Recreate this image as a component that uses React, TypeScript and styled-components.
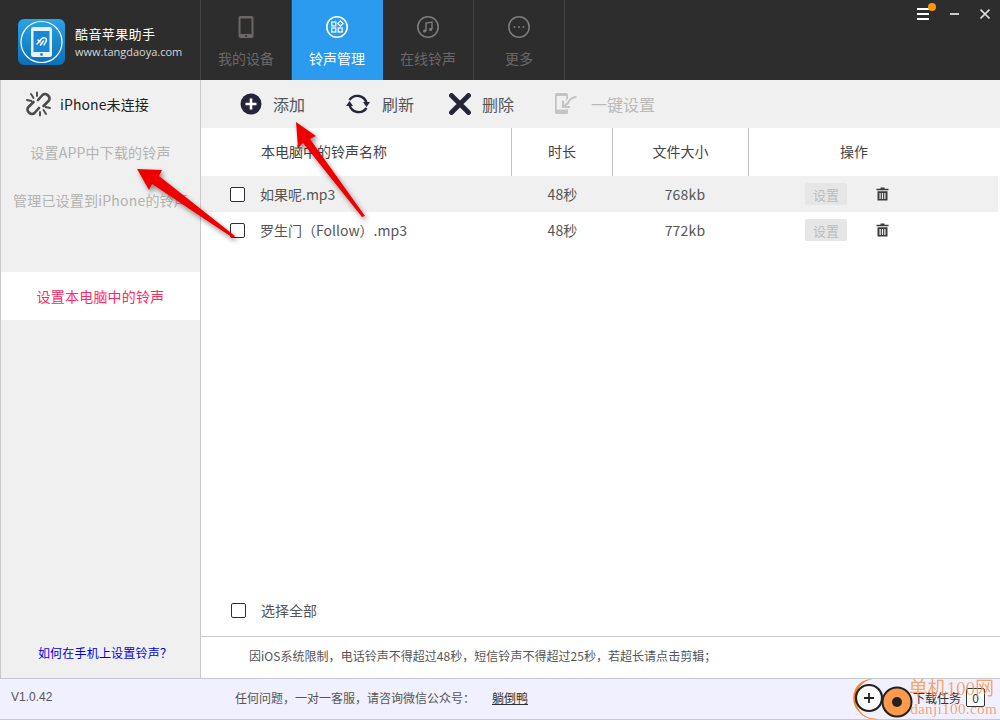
import styled, { createGlobalStyle } from "styled-components"

const CJK = `"Noto Sans CJK SC", "Liberation Sans", sans-serif`

const GlobalStyle = createGlobalStyle`
html, body {
    margin: 0;
    padding: 0;
    background: #fff;
    overflow: hidden;
}
* {
    box-sizing: border-box;
}
`

const Window = styled.div`
position: relative;
width: 1000px;
height: 720px;
display: flex;
flex-direction: column;
font-family: ${CJK};
font-size: 14px;
color: #555;
overflow: hidden;
`

const TopBar = styled.header`
height: 80px;
flex: none;
display: flex;
background: #2d2d2d;
`

const Brand = styled.div`
width: 201px;
flex: none;
display: flex;
align-items: center;
gap: 10px;
padding: 4px 0 0 18px;
border-right: 1px solid #414141;
`

const BrandText = styled.div`
display: flex;
flex-direction: column;
gap: 3px;
`

const BrandName = styled.div`
color: #fff;
font-size: 13px;
letter-spacing: 0.4px;
line-height: 16px;
`

const BrandUrl = styled.div`
color: #d8d8d8;
font-family: "Open Sans", sans-serif;
font-size: 11px;
line-height: 13px;
white-space: nowrap;
`

const Tab = styled.div<{ $active?: boolean }>`
width: 91px;
flex: none;
display: flex;
flex-direction: column;
align-items: center;
padding-top: 15px;
gap: 9px;
background: ${p => p.$active ? '#2a9bee' : 'transparent'};
color: ${p => p.$active ? '#fff' : '#6c6667'};
border-right: 1px solid ${p => p.$active ? '#2a9bee' : '#414141'};
font-size: 14px;
line-height: 20px;

svg {
    height: 24px;
    width: 24px;
}
`

const WindowControls = styled.div`
margin-left: auto;
height: 26px;
display: flex;
align-items: flex-start;
padding: 6px 10px 0 0;
gap: 20px;
`

const MenuButton = styled.div`
position: relative;
width: 12px;
height: 12px;
margin-top: 2px;
margin-right: 1px;
display: flex;
flex-direction: column;
justify-content: space-between;

    span {
    height: 2px;
    background: #fff;
    }

    i {
    position: absolute;
    top: -5px;
    left: 11px;
    width: 8px;
    height: 8px;
    border-radius: 50%;
    background: #ff9800;
    }
`

const Main = styled.div`
flex: 1;
min-height: 0;
display: flex;
`

const Sidebar = styled.aside`
width: 201px;
flex: none;
display: flex;
flex-direction: column;
background: #f0f0f0;
border-left: 1px solid #c8c8c8;
border-right: 1px solid #c8c8c8;
`

const DeviceStatus = styled.div`
height: 48px;
display: flex;
align-items: center;
gap: 8px;
padding-left: 24px;
color: #222;
font-size: 14px;
letter-spacing: 0.1px;
`

const SideItem = styled.div<{ $active?: boolean }>`
height: 48px;
display: flex;
align-items: center;
justify-content: center;
white-space: nowrap;
font-size: 14px;
letter-spacing: 0.2px;
background: ${p => p.$active ? '#fff' : 'transparent'};
color: ${p => p.$active ? '#ff2b68' : '#b2b2b2'};
`

const SideSpacer = styled.div`
height: 48px;
`

const HelpLink = styled.div`
margin-top: auto;
height: 50px;
display: flex;
align-items: center;
justify-content: center;
padding: 0 0 1px 9px;
color: #0000e6;
font-size: 12px;
letter-spacing: 0.2px;
`

const Content = styled.section`
flex: 1;
min-width: 0;
display: flex;
flex-direction: column;
`

const Toolbar = styled.div`
height: 48px;
flex: none;
display: flex;
align-items: center;
background: #f0f0f0;
padding: 0 0 0 39px;
`

const ToolButton = styled.div<{ $disabled?: boolean; $gap: number; $width: number }>`
width: ${p => p.$width}px;
flex: none;
display: flex;
align-items: center;
gap: ${p => p.$gap}px;
font-size: 16px;
color: ${p => p.$disabled ? '#b9b9b9' : '#555'};
white-space: nowrap;
`

const Grid = styled.div`
display: grid;
grid-template-columns: 311px 101px 136px 1fr;
`

const TableHead = styled(Grid)`
height: 48px;
flex: none;
`

const HeadCell = styled.div<{ $first?: boolean }>`
display: flex;
align-items: center;
justify-content: ${p => p.$first ? 'flex-start' : 'center'};
padding-left: ${p => p.$first ? '60px' : '0'};
padding-bottom: 2px;
border-right: 1px solid #c4c4c4;
font-size: 14px;
color: #444;

    &:last-child {
    border-right: 0;
    padding-right: 41px;
    }
`

const Row = styled(Grid)<{ $shaded?: boolean }>`
height: 36px;
width: 797px;
flex: none;
align-items: center;
background: ${p => p.$shaded ? '#f0f0f0' : '#fff'};
`

const NameCell = styled.div`
display: flex;
align-items: center;
gap: 15px;
padding-left: 29px;
`

const Check = styled.span`
width: 15px;
height: 15px;
flex: none;
display: block;
border: 1.5px solid #2d2d3a;
border-radius: 2px;
background: #fff;
`

const ValueCell = styled.div<{ $pad?: number }>`
text-align: center;
padding-left: ${p => p.$pad ?? 0}px;
letter-spacing: 0.2px;
`

const ActionCell = styled.div`
display: flex;
align-items: center;
padding-left: 56px;
gap: 29px;
`

const SetButton = styled.div`
width: 42px;
height: 22px;
display: flex;
align-items: center;
justify-content: center;
border-radius: 2px;
background: #e6e6e6;
color: #bcbcbc;
font-size: 13px;
`

const SelectAll = styled.div`
margin-top: auto;
height: 50px;
flex: none;
display: flex;
align-items: center;
gap: 15px;
padding: 0 0 3px 30px;
border-bottom: 1px solid #c8c8c8;
font-size: 14px;
`

const Notice = styled.div`
height: 41px;
flex: none;
display: flex;
align-items: center;
padding: 0 0 4px 48px;
font-size: 12px;
letter-spacing: 0.03px;
color: #555;
`

const Footer = styled.footer`
height: 42px;
flex: none;
display: flex;
align-items: center;
padding: 0 0 4px 11px;
background: #f0f0fe;
border-top: 1px solid #c8c8d0;
border-bottom: 1px solid #c8c8d0;
font-size: 12px;
color: #555;
`

const Version = styled.div`
width: 224px;
font-family: "Liberation Sans", sans-serif;
`

const Support = styled.div`
width: 257px;
white-space: nowrap;
`

const Wechat = styled.div`
text-decoration: underline;
color: #333;
`

const Tasks = styled.div`
margin-left: auto;
display: flex;
align-items: center;
gap: 5px;
padding-right: 15px;
color: #333;
`

const TaskCount = styled.div`
width: 19px;
height: 19px;
display: flex;
align-items: center;
justify-content: center;
border: 1px solid #333;
border-radius: 2px;
background: #fff;
`

// annotations that were painted over the screenshot
const Overlay = styled.svg`
position: absolute;
top: 0;
left: 0;
width: 1000px;
height: 720px;
pointer-events: none;
`

const Watermark = styled.div`
position: absolute;
right: 3px;
bottom: 2px;
display: flex;
flex-direction: column;
align-items: flex-end;
color: #ff8a3c;
opacity: 0.75;
font-family: "Liberation Serif", "Noto Sans CJK SC", serif;
pointer-events: none;
`

const WatermarkName = styled.div`
font-size: 19px;
line-height: 24px;
white-space: nowrap;
margin-right: 3px;
`

const WatermarkUrl = styled.div`
font-size: 15px;
line-height: 17px;
letter-spacing: 0.4px;
`

function Logo() {
    return (
        <svg width="47" height="46" viewBox="0 0 47 46">
            <defs>
                <linearGradient id="logoBg" x1="0" y1="0" x2="0" y2="1">
                    <stop offset="0" stopColor="#2aa3e8" />
                    <stop offset="1" stopColor="#0b6fb8" />
                </linearGradient>
            </defs>
            <rect width="47" height="46" rx="6" fill="url(#logoBg)" />
            <circle cx="23.5" cy="23" r="20.500" fill="none" stroke="#fff" strokeWidth="1.200" />
            <rect x="13" y="8" width="21" height="30" rx="2.500" fill="#e8f2fa" />
            <rect x="15.500" y="12" width="16" height="21" fill="#1a86d4" />
            <circle cx="23.500" cy="35.500" r="1.400" fill="#1a86d4" />
            <path d="M19 25l4.500-5c2.500-2.500 6-0.500 4.500 2.500l-2 3.500M22.500 26l3-4M20 21l2 2" fill="none" stroke="#fff" strokeWidth="1.500" strokeLinecap="round" />
        </svg>
    )
}

function PhoneIcon() {
    return (
        <svg viewBox="0 0 24 24">
            <rect x="4.500" y="1" width="15" height="22" rx="2" fill="#6c6667" />
            <rect x="6.500" y="3.500" width="11" height="15.500" fill="#2d2d2d" />
            <circle cx="12" cy="21" r="1" fill="#2d2d2d" />
        </svg>
    )
}

function AppsIcon() {
    return (
        <svg viewBox="0 0 24 24" fill="none" stroke="#fff">
            <circle cx="12" cy="12" r="10.200" strokeWidth="1.600" />
            <rect x="6.800" y="7" width="4" height="4" strokeWidth="1.200" />
            <rect x="13.500" y="6.600" width="3.800" height="3.800" strokeWidth="1.200" transform="rotate(45 15.400 8.500)" />
            <rect x="6.800" y="13" width="4" height="4" strokeWidth="1.200" />
            <rect x="13.200" y="13" width="4" height="4" strokeWidth="1.200" />
        </svg>
    )
}

function MusicIcon() {
    return (
        <svg viewBox="0 0 24 24" fill="none" stroke="#7d7d7d">
            <circle cx="12" cy="12" r="10.200" strokeWidth="1.600" />
            <path d="M10 16V8l6-1v7" strokeWidth="1.400" />
            <circle cx="8.600" cy="16" r="1.600" fill="#7d7d7d" strokeWidth="0" />
            <circle cx="14.600" cy="14.400" r="1.600" fill="#7d7d7d" strokeWidth="0" />
        </svg>
    )
}

function MoreIcon() {
    return (
        <svg viewBox="0 0 24 24" fill="none" stroke="#7d7d7d">
            <circle cx="12" cy="12" r="10.200" strokeWidth="1.600" />
            <circle cx="7.500" cy="12" r="1" fill="#7d7d7d" strokeWidth="0" />
            <circle cx="12" cy="12" r="1" fill="#7d7d7d" strokeWidth="0" />
            <circle cx="16.500" cy="12" r="1" fill="#7d7d7d" strokeWidth="0" />
        </svg>
    )
}

function MinimizeIcon() {
    return (
        <svg width="10" height="14" viewBox="0 0 10 14">
            <rect x="0" y="7" width="9" height="2" fill="#ccc" />
        </svg>
    )
}

function CloseIcon() {
    return (
        <svg width="10" height="14" viewBox="0 0 10 14">
            <path d="M0.500 3.500l9 9M9.500 3.500l-9 9" stroke="#ddd" strokeWidth="1.700" />
        </svg>
    )
}

function BrokenLinkIcon() {
    return (
        <svg width="27" height="26" viewBox="0 0 27 26" fill="none" stroke="#4a4a4a" strokeWidth="2.600" strokeLinecap="round" strokeLinejoin="round">
            <path d="M13 9l4.500-5a3.500 3.500 0 0 1 5 0l1 1a3.500 3.500 0 0 1 0 5l-5 5" />
            <path d="M14 17l-4.500 5a3.500 3.500 0 0 1-5 0l-1-1a3.500 3.500 0 0 1 0-5l5-5" />
            <path d="M2 9l4.500 1M6 3l2.500 4M12 1.500v3.500M25 17l-4.500-1M21 23l-2.500-4M15 24.500V21" strokeWidth="1.900" />
        </svg>
    )
}

function AddIcon() {
    return (
        <svg width="22" height="22" viewBox="0 0 22 22">
            <circle cx="11" cy="11" r="10.500" fill="#25253a" />
            <path d="M11 5.500v11M5.500 11h11" stroke="#fff" strokeWidth="2.600" />
        </svg>
    )
}

function RefreshIcon() {
    return (
        <svg width="24" height="24" viewBox="0 0 24 24" fill="none">
            <path d="M3.500 8a9.500 9.500 0 0 1 17 3" stroke="#25253a" strokeWidth="2.400" />
            <path d="M20.500 16a9.500 9.500 0 0 1-17-3" stroke="#25253a" strokeWidth="2.400" />
            <path d="M17 10h7l-3.500 5zM0 14h7l-3.500-5z" fill="#25253a" />
        </svg>
    )
}

function DeleteIcon() {
    return (
        <svg width="22" height="22" viewBox="0 0 22 22">
            <path d="M2.500 2.500l17 17M19.500 2.500l-17 17" stroke="#25253a" strokeWidth="4.800" strokeLinecap="round" />
        </svg>
    )
}

function OneKeyIcon() {
    return (
        <svg width="22" height="22" viewBox="0 0 22 22" fill="none">
            <rect x="0" y="0" width="13" height="21" rx="1.500" fill="#c4c4c4" />
            <rect x="1.800" y="3" width="9.400" height="13.500" fill="#f0f0f0" />
            <path d="M21.500 4c-4 0-7.500 3-9 7" stroke="#f0f0f0" strokeWidth="4.500" />
            <path d="M21.500 4c-4 0-7.500 3-9 7" stroke="#c4c4c4" strokeWidth="2.200" />
            <path d="M8 7.500v6.500h7" stroke="#f0f0f0" strokeWidth="4.500" />
            <path d="M8 7.500v6.500h7" stroke="#c4c4c4" strokeWidth="2.200" />
            <path d="M8 14l5-4" stroke="#c4c4c4" strokeWidth="2.200" />
        </svg>
    )
}

function TrashIcon() {
    return (
        <svg width="13" height="14" viewBox="0 0 13 14">
            <path d="M4.500 0.500h4v1.200h4v1.600H0.500V1.700h4zM1.500 4.300h10v9.200h-10zM3.500 6v6h1.200V6zM5.900 6v6h1.200V6zM8.300 6v6h1.200V6z" fill="#3c3c3c" fillRule="evenodd" />
        </svg>
    )
}

const rows = [
    { name: '如果呢.mp3', time: '48秒', size: '768kb', shaded: true },
    { name: '罗生门（Follow）.mp3', time: '48秒', size: '772kb', shaded: false },
]

export default function App() {
    return (
        <Window>
            <GlobalStyle />
            <TopBar>
                <Brand>
                    <Logo />
                    <BrandText>
                        <BrandName>酷音苹果助手</BrandName>
                        <BrandUrl>www.tangdaoya.com</BrandUrl>
                    </BrandText>
                </Brand>
                <Tab><PhoneIcon />我的设备</Tab>
                <Tab $active><AppsIcon />铃声管理</Tab>
                <Tab><MusicIcon />在线铃声</Tab>
                <Tab><MoreIcon />更多</Tab>
                <WindowControls>
                    <MenuButton><span /><span /><span /><i /></MenuButton>
                    <MinimizeIcon />
                    <CloseIcon />
                </WindowControls>
            </TopBar>
            <Main>
                <Sidebar>
                    <DeviceStatus><BrokenLinkIcon />iPhone未连接</DeviceStatus>
                    <SideItem>设置APP中下载的铃声</SideItem>
                    <SideItem>管理已设置到iPhone的铃声</SideItem>
                    <SideSpacer />
                    <SideItem $active>设置本电脑中的铃声</SideItem>
                    <HelpLink>如何在手机上设置铃声？</HelpLink>
                </Sidebar>
                <Content>
                    <Toolbar>
                        <ToolButton $width={106} $gap={11}><AddIcon />添加</ToolButton>
                        <ToolButton $width={103} $gap={12}><RefreshIcon />刷新</ToolButton>
                        <ToolButton $width={106} $gap={11}><DeleteIcon />删除</ToolButton>
                        <ToolButton $disabled $width={110} $gap={14}><OneKeyIcon />一键设置</ToolButton>
                    </Toolbar>
                    <TableHead>
                        <HeadCell $first>本电脑中的铃声名称</HeadCell>
                        <HeadCell>时长</HeadCell>
                        <HeadCell>文件大小</HeadCell>
                        <HeadCell>操作</HeadCell>
                    </TableHead>
                    {rows.map(row => (
                        <Row key={row.name} $shaded={row.shaded}>
                            <NameCell><Check />{row.name}</NameCell>
                            <ValueCell>{row.time}</ValueCell>
                            <ValueCell $pad={8}>{row.size}</ValueCell>
                            <ActionCell>
                                <SetButton>设置</SetButton>
                                <TrashIcon />
                            </ActionCell>
                        </Row>
                    ))}
                    <SelectAll><Check />选择全部</SelectAll>
                    <Notice>因iOS系统限制，电话铃声不得超过48秒，短信铃声不得超过25秒，若超长请点击剪辑；</Notice>
                </Content>
            </Main>
            <Footer>
                <Version>V1.0.42</Version>
                <Support>任何问题，一对一客服，请咨询微信公众号：</Support>
                <Wechat>躺倒鸭</Wechat>
                <Tasks>下载任务<TaskCount>0</TaskCount></Tasks>
            </Footer>
            <Overlay viewBox="0 0 1000 720">
                <defs>
                    <filter id="arrowShadow" x="-30%" y="-30%" width="160%" height="160%">
                        <feDropShadow dx="2" dy="3" stdDeviation="2.500" floodColor="#000" floodOpacity="0.45" />
                    </filter>
                </defs>
                <g filter="url(#arrowShadow)" fill="#ee0000">
                    <path d="M296 122l20 14-6 3 55 77-3 1-59-74-5 5z" />
                    <path d="M137 169l25 1-3 6 76 60-2 2-81-54-3 6z" />
                </g>
                <path d="M873 679a20 20 0 0 0-3 39l8 1a22 22 0 0 1-20-8a20 20 0 0 1 1-27a21 21 0 0 1 14-5z" fill="#f5841f" />
                <circle cx="869" cy="698" r="13" fill="#fafafa" stroke="#222" strokeWidth="2.200" />
                <path d="M864 698h10M869 693v10" stroke="#222" strokeWidth="1.800" />
                <circle cx="897" cy="702" r="14.500" fill="#ff9a4d" stroke="#222" strokeWidth="2" />
                <circle cx="897" cy="702" r="5" fill="#222" />
            </Overlay>
            <Watermark>
                <WatermarkName>单机100网</WatermarkName>
                <WatermarkUrl>danji100.com</WatermarkUrl>
            </Watermark>
        </Window>
    )
}
